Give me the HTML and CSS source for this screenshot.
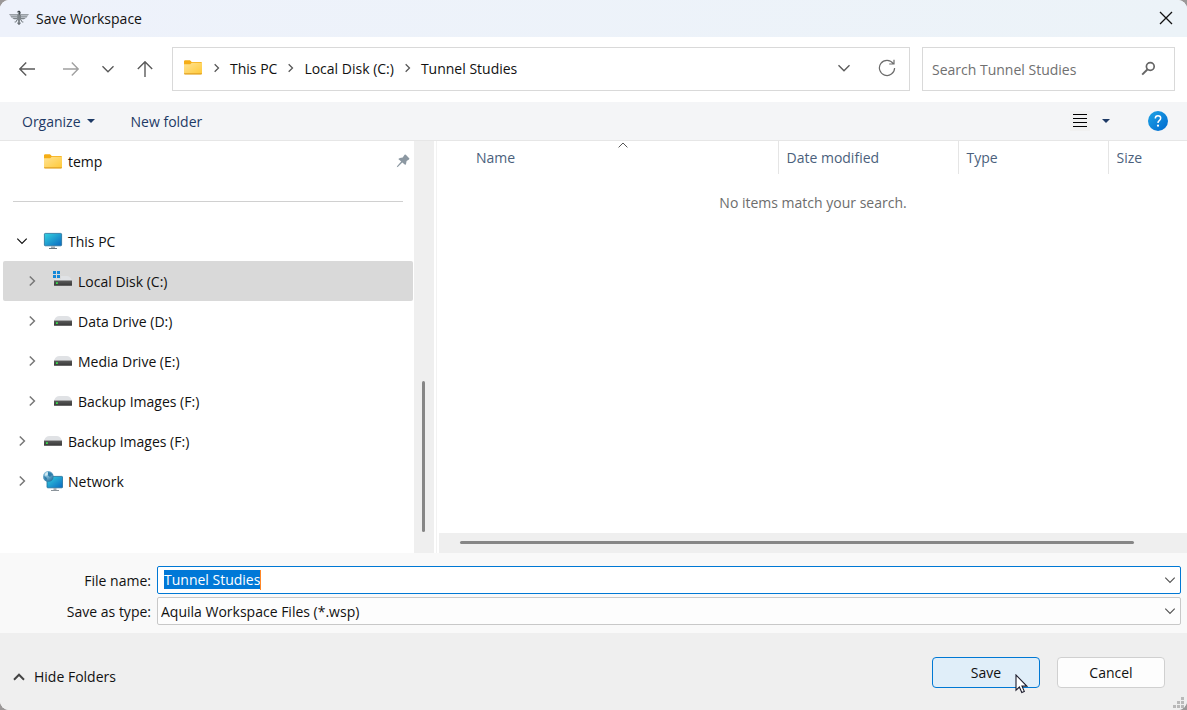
FILE: index.html
```html
<!DOCTYPE html>
<html lang="en">
<head>
<meta charset="utf-8">
<title>Save Workspace</title>
<link rel="stylesheet" href="styles.css">
</head>
<body>
<svg class="defs" aria-hidden="true">
  <defs>
    <linearGradient id="gFolder" x1="0" y1="0" x2="1" y2="1"><stop offset="0" stop-color="#ffe394"/><stop offset="1" stop-color="#ffc937"/></linearGradient>
    <linearGradient id="gScreen" x1="0" y1="0" x2="1" y2="1"><stop offset="0" stop-color="#35d3e0"/><stop offset="1" stop-color="#0a68c0"/></linearGradient>
    <linearGradient id="gDrive" x1="0" y1="0" x2="0" y2="1"><stop offset="0" stop-color="#5c5c5c"/><stop offset="1" stop-color="#373737"/></linearGradient>
    <linearGradient id="gHelp" x1="0" y1="0" x2="1" y2="1"><stop offset="0" stop-color="#1ea4e6"/><stop offset="1" stop-color="#0069cf"/></linearGradient>
    <radialGradient id="gGlobe" cx=".35" cy=".3" r=".8"><stop offset="0" stop-color="#9fd3ea"/><stop offset="1" stop-color="#1f6d9c"/></radialGradient>
    <symbol id="folder" viewBox="0 0 18 15">
      <path d="M0 1.5Q0 .3 1.2.3H6L7.7 2H16.8Q18 2 18 3V8H0z" fill="#f5ad15"/>
      <path d="M0 4.3H6.2L7.8 2.8H18V13.2Q18 14.2 17 14.2H1Q0 14.2 0 13.2z" fill="url(#gFolder)"/>
      <path d="M0 13.2H18Q18 14.4 17 14.4H1Q0 14.4 0 13.2z" fill="#e0a024"/>
    </symbol>
    <symbol id="drive" viewBox="0 0 20 20">
      <path d="M1 9.6Q2 6.4 4 5.4 5 5 6 5H14Q15 5 16 5.4 18 6.4 19 9.6z" fill="#e0e2e5"/>
      <path d="M1 9.4H19V14.2Q19 14.8 18.4 14.8H1.6Q1 14.8 1 14.2z" fill="url(#gDrive)"/>
      <rect x="3" y="11.2" width="1.8" height="1.8" fill="#35e04c"/>
    </symbol>
    <symbol id="right" viewBox="0 0 12 12"><path d="M3.8 1.5 8.4 6 3.8 10.5" fill="none" stroke="currentColor" stroke-width="1.5"/></symbol>
    <symbol id="down" viewBox="0 0 14 14"><path d="M1.5 4.2 7 9.7 12.5 4.2" fill="none" stroke="currentColor" stroke-width="1.4"/></symbol>
  </defs>
</svg>

<main class="dialog">
  <header class="titlebar">
    <svg class="eagle" width="20" height="16" viewBox="0 0 20 16"><g fill="#7d8489"><path d="M0 4.2H8.3V5.6H1.2zM1.4 6.2H8V7.5H2.4zM3.2 8H8V9.3H5z"/><path d="M20 4.2H11.7V5.6H18.8zM18.6 6.2H12V7.5H17.6zM16.8 8H12V9.3H15z"/><path d="M8.2 4.2 9.2 3.6 9.4 2.6 7.8 2.4 8.6 1.3Q10.8.4 11.4 2.2L11 4 12 4.7V9.5L10.8 11.2 12 13.7H8L9.2 11.2 8 9.5z"/><path d="M7.8 9.8 7 12H5.6M12.2 9.8 13 12H14.4" fill="none" stroke="#7d8489"/></g><path d="M9.5 13V15H10.5V13z" fill="#3c4248"/><path d="M8.8 1.4Q10.7.7 11 2.6L10.6 4.5" fill="none" stroke="#333a40" stroke-width="1.1"/></svg>
    <h1>Save Workspace</h1>
    <button class="icon-btn close" aria-label="Close"><svg width="14" height="14" viewBox="0 0 14 14"><path d="M1 1 13 13M13 1 1 13" stroke="#111" stroke-width="1.3"/></svg></button>
  </header>

  <nav class="navbar">
    <div class="history">
      <button class="icon-btn" aria-label="Back"><svg width="18" height="18" viewBox="0 0 18 18"><path d="M17 9H2M8.2 2.6 1.8 9 8.2 15.4" fill="none" stroke="#5b5b5b" stroke-width="1.4"/></svg></button>
      <button class="icon-btn" aria-label="Forward"><svg width="18" height="18" viewBox="0 0 18 18"><path d="M1 9H16M9.8 2.6 16.2 9 9.8 15.4" fill="none" stroke="#a0a0a0" stroke-width="1.4"/></svg></button>
      <button class="icon-btn recent" aria-label="Recent locations"><svg width="14" height="14"><use href="#down"/></svg></button>
      <button class="icon-btn" aria-label="Up"><svg width="18" height="18" viewBox="0 0 18 18"><path d="M9 17V2M1.8 9 9 1.8 16.2 9" fill="none" stroke="#5b5b5b" stroke-width="1.4"/></svg></button>
    </div>
    <div class="address">
      <svg width="20" height="15"><use href="#folder"/></svg>
      <svg class="sep" width="11" height="10"><use href="#right"/></svg>
      <a href="#">This PC</a>
      <svg class="sep" width="11" height="10"><use href="#right"/></svg>
      <a href="#">Local Disk (C:)</a>
      <svg class="sep" width="11" height="10"><use href="#right"/></svg>
      <a href="#">Tunnel Studies</a>
      <div class="address-tools">
        <button class="icon-btn" aria-label="Previous locations"><svg width="14" height="14"><use href="#down"/></svg></button>
        <button class="icon-btn" aria-label="Refresh"><svg width="18" height="18" viewBox="0 0 18 18"><path d="M15.2 4.5A7.6 7.6 0 1 0 16.6 9M16 .8V5H11.2" fill="none" stroke="#6b6b6b" stroke-width="1.2"/></svg></button>
      </div>
    </div>
    <div class="search">
      <input type="search" placeholder="Search Tunnel Studies" aria-label="Search Tunnel Studies">
      <svg width="15" height="15" viewBox="0 0 15 15"><circle cx="9.3" cy="5.5" r="3.9" fill="none" stroke="#666" stroke-width="1.7"/><path d="M6.6 8.3 1.2 13.6" stroke="#666" stroke-width="2"/></svg>
    </div>
  </nav>

  <div class="toolbar">
    <button class="tool">Organize <svg width="8" height="4" viewBox="0 0 8 4"><path d="M0 0H8L4 4z" fill="#1e3a66"/></svg></button>
    <button class="tool">New folder</button>
    <button class="icon-btn view" aria-label="View"><svg width="14" height="14" viewBox="0 0 14 14"><path d="M0 .5H14M0 4.5H14M0 8.5H14M0 12.5H14" stroke="#000"/></svg></button>
    <button class="icon-btn" aria-label="More view options"><svg width="8" height="4" viewBox="0 0 8 4"><path d="M0 0H8L4 4z" fill="#1e3a66"/></svg></button>
    <button class="icon-btn help" aria-label="Help"><svg width="20" height="20" viewBox="0 0 20 20"><circle cx="10" cy="10" r="10" fill="url(#gHelp)"/><path d="M7.3 7.4Q7.3 4.7 10 4.7T12.7 7.1Q12.7 8.6 11.3 9.6 10 10.5 10 12" fill="none" stroke="#fff" stroke-width="1.5"/><circle cx="10" cy="14.7" r="1.1" fill="#fff"/></svg></button>
  </div>

  <div class="browser">
    <aside class="tree">
      <ul>
        <li class="row"><span class="chev"></span><svg class="ico" width="20" height="15"><use href="#folder"/></svg>temp
          <svg class="pin" width="14" height="14" viewBox="0 0 14 14"><path d="M8.6.8Q9.2.3 9.8.8L13.2 4.2Q13.8 4.8 13 5.4L10.6 7Q10.3 10 9.3 11L6.3 8.4 2 12.8.8 13.2 1.2 12 5.2 7.5 2.3 5Q3.4 3.7 6.7 3.4z" fill="#8c98a2"/></svg></li>
        <li class="divider" role="separator"></li>
        <li class="row open"><svg class="chev" width="12" height="12"><use href="#down"/></svg><svg class="ico" width="20" height="18" viewBox="0 0 20 18"><rect x="1.4" y="1.4" width="17.2" height="12.4" rx=".8" fill="url(#gScreen)" stroke="#256f99" stroke-width=".8"/><path d="M8 14.2H12V16H8z" fill="#a4adb4"/><path d="M6 16H14V17H6z" fill="#68727a"/></svg>This PC</li>
        <li class="row child selected"><svg class="chev" width="12" height="12"><use href="#right"/></svg><svg class="ico" width="20" height="20"><use href="#drive"/><path d="M0 0H8V8H0z" fill="#d9d9d9"/><path d="M0 0H3V3H0zM4 0H7V3H4zM0 4H3V7H0zM4 4H7V7H4z" fill="#1488d8"/></svg>Local Disk (C:)</li>
        <li class="row child"><svg class="chev" width="12" height="12"><use href="#right"/></svg><svg class="ico" width="20" height="20"><use href="#drive"/></svg>Data Drive (D:)</li>
        <li class="row child"><svg class="chev" width="12" height="12"><use href="#right"/></svg><svg class="ico" width="20" height="20"><use href="#drive"/></svg>Media Drive (E:)</li>
        <li class="row child"><svg class="chev" width="12" height="12"><use href="#right"/></svg><svg class="ico" width="20" height="20"><use href="#drive"/></svg>Backup Images (F:)</li>
        <li class="row"><svg class="chev" width="12" height="12"><use href="#right"/></svg><svg class="ico" width="20" height="20"><use href="#drive"/></svg>Backup Images (F:)</li>
        <li class="row"><svg class="chev" width="12" height="12"><use href="#right"/></svg><svg class="ico" width="20" height="20" viewBox="0 0 20 20"><rect x="4" y="5.4" width="15.6" height="11.4" rx=".8" fill="url(#gScreen)" stroke="#1b6c98" stroke-width=".8"/><path d="M10.5 17H13.5V19H10.5z" fill="#a4adb4"/><path d="M8 19H16V20H8z" fill="#8b949b"/><circle cx="5.3" cy="5.4" r="5.3" fill="url(#gGlobe)"/><path d="M5 1Q8 1 9.5 3.5L7 6 5 4.5zM1 5 4 7 3.5 9.5Q1 8 1 5z" fill="#2f7daa"/><path d="M2 3Q3 1 5 1L4.5 4 2.4 5z" fill="#d3e9f0"/></svg>Network</li>
      </ul>
    </aside>
    <div class="vscroll"><div class="thumb"></div></div>
    <section class="files">
      <table>
        <thead><tr>
          <th class="name">Name<svg class="sort" width="10" height="6" viewBox="0 0 10 6"><path d="M.6 5.4 5 1 9.4 5.4" fill="none" stroke="#555"/></svg></th>
          <th class="date">Date modified</th><th class="type">Type</th><th class="size">Size</th>
        </tr></thead>
      </table>
      <p class="empty">No items match your search.</p>
      <div class="hscroll"><div class="thumb"></div></div>
    </section>
  </div>

  <form class="fields">
    <label for="filename">File name:</label>
    <div class="combo active">
      <input id="filename" type="text" value="Tunnel Studies" autocomplete="off">
      <span class="caret"></span>
      <svg class="drop" width="12" height="12"><use href="#down"/></svg>
    </div>
    <label for="filetype">Save as type:</label>
    <div class="combo">
      <select id="filetype"><option>Aquila Workspace Files (*.wsp)</option></select>
      <svg class="drop" width="12" height="12"><use href="#down"/></svg>
    </div>
  </form>

  <footer class="actions">
    <button class="hide"><svg width="12" height="8" viewBox="0 0 12 8"><path d="M1 6.7 6 1.7 11 6.7" fill="none" stroke="#444" stroke-width="2"/></svg>Hide Folders</button>
    <button class="btn primary">Save</button>
    <button class="btn">Cancel</button>
    <svg class="grip" width="11" height="11" viewBox="0 0 11 11"><path d="M8 0H11V3H8zM4 4H7V7H4zM8 4H11V7H8zM0 8H3V11H0zM4 8H7V11H4zM8 8H11V11H8z" fill="#b9b9b9"/></svg>
    <svg class="cursor" width="13" height="20" viewBox="0 0 13 20"><path d="M1 1V16.2L4.4 13 6.8 18.5 9.3 17.4 7 12.1H11.8z" fill="#fff" stroke="#1c1c2c" stroke-width="1.1"/></svg>
  </footer>
</main>
<script src="script.js"></script>
</body>
</html>
```
FILE: styles.css
```css
* { box-sizing: border-box; }
html { background: #9b9898; }
body {
  margin: 0;
  font: 14px/20px "Open Sans", "Noto Sans", sans-serif;
  color: #111;
}
button, input, select { font: inherit; color: inherit; margin: 0; }
button { border: 0; background: none; padding: 0; }
a { color: inherit; text-decoration: none; }
svg { display: block; flex: none; }
.defs { position: absolute; width: 0; height: 0; }

.dialog {
  min-height: 100vh;
  display: flex;
  flex-direction: column;
  background: #fff;
  border-radius: 9px;
  overflow: hidden;
}
.icon-btn { display: grid; place-items: center; color: #5b5b5b; }

.titlebar {
  display: flex;
  align-items: center;
  height: 37px;
  padding: 0 14px 0 9px;
  background: linear-gradient(90deg, #eef2fb, #ecf3f8);
}
.titlebar h1 { margin: 0 auto 0 7px; font-size: 14px; font-weight: 400; }
.eagle, .close { margin-bottom: 2px; }

.navbar {
  display: flex;
  align-items: center;
  gap: 12px;
  height: 65px;
  padding: 0 12px 2px 18px;
}
.history { display: flex; gap: 26px; width: 142px; }
.history .recent { width: 18px; margin: 0 -7px; }
.address, .search {
  display: flex;
  align-items: center;
  height: 44px;
  border: 1px solid #d9d9d9;
}
.address { flex: 1; gap: 8px; padding: 0 13px 2px 10px; }
.address a { padding-top: 2px; }
.sep { color: #555; }
.address-tools { display: flex; gap: 27px; margin-left: auto; }
.search { width: 253px; padding: 0 18px 0 9px; }
.search input {
  flex: 1;
  min-width: 0;
  border: 0;
  padding: 2px 0 0;
  background: none;
  outline: 0;
}
.search input::placeholder { color: #707070; opacity: 1; }

.toolbar {
  display: flex;
  align-items: center;
  height: 39px;
  padding: 0 19px 0 22px;
  background: #f4f5f7;
  border-bottom: 1px solid #e6e6e6;
  color: #1e3a66;
}
.tool { display: flex; align-items: center; gap: 6px; margin-right: 36px; padding-top: 2px; }
.tool svg { margin-bottom: 2px; }
.view { margin: 0 12px 0 auto; width: 20px; height: 20px; background: #f1f1f1; }
.help { margin-left: 38px; }

.browser { flex: 1; display: flex; }
.tree { width: 35%; max-width: 414px; }
.tree ul { list-style: none; margin: 0; padding: 0 1px 12px 3px; }
.row {
  display: flex;
  align-items: center;
  height: 40px;
  padding: 2px 0 0 13px;
  border-radius: 2px;
}
.row svg { margin-bottom: 2px; }
.row .chev { width: 12px; color: #777; }
.row .ico { margin-left: 15px; margin-right: 5px; }
.row.open .chev { color: #111; }
.row.child { padding-left: 23px; }
.row.selected { background: #d9d9d9; }
.row .pin { margin-left: auto; margin-right: 3px; }
.divider { height: 40px; padding: 20px 10px 0; }
.divider::before { content: ""; display: block; border-top: 1px solid #d0d0d0; }
.vscroll { display: flex; flex-direction: column; justify-content: flex-end; width: 20px; padding: 0 0 21px 8px; background: #efefef; }
.thumb { background: #868686; border-radius: 2px; }
.vscroll .thumb { width: 3px; height: 151px; }

.files {
  flex: 1;
  display: flex;
  flex-direction: column;
  margin-left: 2px;
  padding-left: 2px;
  border-left: 1px solid #f2f2f2;
}
.files table { margin-left: 30px; border-collapse: collapse; table-layout: fixed; width: calc(100% - 30px); color: #4b5f7c; }
.files th {
  position: relative;
  height: 33px;
  padding: 0 7px;
  text-align: left;
  font-weight: 400;
}
.files th + th { border-left: 1px solid #e5e5e5; padding-left: 8px; }
.date { width: 180px; }
.type { width: 150px; }
.size { width: 79px; }
.sort { position: absolute; top: 1px; left: calc(50% - 5px); }
.empty { margin: 19px 0 0; text-align: center; color: #6d6d6d; }
.hscroll { height: 20px; margin-top: auto; padding: 8px 53px 0 21px; background: #efefef; }
.hscroll .thumb { height: 3px; }

.fields {
  display: grid;
  grid-template-columns: 151px 1fr;
  gap: 3px 6px;
  align-items: center;
  padding: 13px 6px 8px 0;
  background: #f9f9f9;
}
.fields label { text-align: right; padding-top: 2px; }
.combo { position: relative; height: 28px; border: 1px solid #c8c8c8; border-radius: 2px; background: #fdfdfd; color: #555; }
.combo.active { border-color: #0078d4; background: #fff; }
.combo input, .combo select {
  display: block;
  width: 100%;
  height: 26px;
  border: 0;
  outline: 0;
  background: none;
  appearance: none;
  color: #111;
}
.combo input { padding: 0 24px 2px 6px; }
.combo select { padding: 2px 24px 0 3px; }
.combo input::selection { background: #0078d7; color: #fff; }
.caret { position: absolute; left: 102px; top: 3px; width: 1px; height: 20px; background: #ff8728; }
.drop { position: absolute; right: 4px; top: 7px; pointer-events: none; }

.actions {
  position: relative;
  display: flex;
  align-items: center;
  gap: 17px;
  height: 77px;
  padding: 0 22px 0 13px;
  background: #efefef;
}
.hide { display: flex; align-items: center; gap: 9px; margin: 10px auto 0 0; }
.btn {
  width: 108px;
  height: 31px;
  margin-top: 2px;
  border: 1px solid #d0d0d0;
  border-radius: 4px;
  background: #fdfdfd;
}
.primary { border-color: #0078d4; background: #e0eef9; }
.grip { position: absolute; right: 3px; bottom: 2px; }
.cursor { position: absolute; right: 159px; top: 41px; }
```
FILE: script.js
```js
const filename = document.getElementById("filename");
filename.focus();
filename.select();
```
